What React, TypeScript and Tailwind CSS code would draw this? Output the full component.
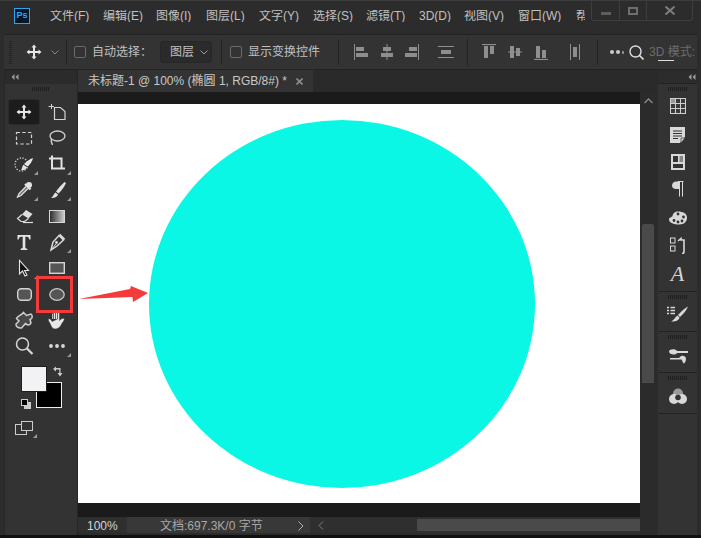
import React from "react";

const FONT = { fontFamily: '"Liberation Sans","Noto Sans CJK SC",sans-serif' };

const s = "#d2d2d2";
function Ic({ children, w = 24, h = 24 }: { children: React.ReactNode; w?: number; h?: number }) {
  return (
    <svg width={w} height={h} viewBox={`0 0 ${w} ${h}`} fill="none" className="block">
      {children}
    </svg>
  );
}

function Corner() {
  return <span className="absolute right-[2px] bottom-[2px] w-0 h-0 border-l-[4px] border-l-transparent border-b-[4px] border-b-[#9a9a9a]" />;
}

const MoveIcon = ({ c = "#e6e6e6" }: { c?: string }) => (
  <Ic w={16} h={16}>
    <path d="M8 0.5 L10.5 3.5 H9 V7 H12.5 V5.5 L15.5 8 L12.5 10.5 V9 H9 V12.5 H10.5 L8 15.5 L5.5 12.5 H7 V9 H3.5 V10.5 L0.5 8 L3.5 5.5 V7 H7 V3.5 H5.5 Z" fill={c} />
  </Ic>
);

const tools: { icon: React.ReactNode; corner?: boolean; active?: boolean }[] = [
  { icon: <MoveIcon />, active: true },
  { icon: <Ic><path d="M3.5 6.5H9M6.5 4V9" stroke={s} /><path d="M9.5 7.5H15.5L20 11.5V19.5H9.5V7.5Z" stroke={s} strokeWidth="1.2" /></Ic> },
  { icon: <Ic><rect x="4.5" y="6.5" width="15" height="11.5" stroke={s} strokeWidth="1.2" strokeDasharray="3.5 2.2" /></Ic> },
  { icon: <Ic><ellipse cx="12.5" cy="10" rx="7.5" ry="5" stroke={s} strokeWidth="1.3" /><path d="M6.5 13C5.5 15 6.5 17 7.5 19" stroke={s} strokeWidth="1.3" /></Ic> },
  { corner: true, icon: <Ic><circle cx="9.5" cy="12.5" r="6.5" stroke={s} strokeWidth="1.4" strokeDasharray="1.2 1.6" /><path d="M21 6C20.5 9 18 12.5 15.5 14.5L12 12C14.5 9.5 17.5 7 21 6Z" fill="#e6e6e6" /><path d="M11.5 12.8L15 15.2C14 17.5 11.5 18.5 9 18C10.5 16.5 10 14 11.5 12.8Z" fill="#e6e6e6" /></Ic> },
  { corner: true, icon: <Ic><path d="M4 6.5H7V3.5M7 6.5H16.5V16M7 6.5V16.5H20" stroke="#e2e2e2" strokeWidth="2" /></Ic> },
  { corner: true, icon: <Ic><circle cx="17" cy="7" r="3" fill="#e4e4e4" /><path d="M13 6L18.5 11.5" stroke="#e4e4e4" strokeWidth="2.2" /><path d="M14 8.5L7 15.5L5.5 19L9 17.5L16 10.5" fill="#777" stroke="#e2e2e2" strokeWidth="1.2" /></Ic> },
  { corner: true, icon: <Ic><path d="M19.5 4L21 5C19 9 16.5 13 13.5 15.5L11 13.5C13.5 10 16.5 7 19.5 4Z" fill="#e2e2e2" /><path d="M10.5 14.5L13 16.5C12.5 19 9 20.5 6 20C8 19 8.5 16 10.5 14.5Z" fill="#e2e2e2" /></Ic> },
  { icon: <Ic><path d="M14 6L20.5 10L16.5 14.5L10 10.5Z" fill="#dedede" /><path d="M10 10.5L5.5 14.5L9 17.5H12.5L16.5 14.5" stroke="#dedede" strokeWidth="1.2" /><path d="M11 18.5H21" stroke="#dedede" strokeWidth="1.2" /></Ic> },
  { icon: <svg width={16} height={13} className="block"><defs><linearGradient id="gr" x1="0" x2="1" y1="0" y2="0"><stop offset="0" stopColor="#2a2a2a" /><stop offset="1" stopColor="#d0d0d0" /></linearGradient></defs><rect x="0.5" y="0.5" width="15" height="12" fill="url(#gr)" stroke="#d8d8d8" /></svg> },
  { icon: <Ic><path d="M5.5 5H18.5V9.5H17.3C17.1 8 16.4 6.8 15 6.8H13.3V17.5C13.3 18.4 14.2 18.6 15.3 18.7V20H8.7V18.7C9.8 18.6 10.7 18.4 10.7 17.5V6.8H9C7.6 6.8 6.9 8 6.7 9.5H5.5Z" fill="#e4e4e4" /></Ic> },
  { corner: true, icon: <Ic><path d="M6 20L8 12L14 5.5L18.5 10L12 16Z" stroke="#dcdcdc" strokeWidth="1.5" /><path d="M14.5 4.5L19.5 9.5" stroke="#dcdcdc" strokeWidth="2" /><circle cx="11.5" cy="12.5" r="1.4" fill="#dcdcdc" /><path d="M6 20L11 14" stroke="#dcdcdc" /></Ic> },
  { corner: true, icon: <Ic><path d="M7.5 4.5V18L10.5 15L13 20L15 19L12.5 14.5H16.5Z" fill="#111" stroke="#e4e4e4" strokeWidth="1.1" /></Ic> },
  { icon: <svg width={16} height={12} className="block"><rect x="0.7" y="0.7" width="14.6" height="10.6" fill="#555" stroke="#d4d4d4" strokeWidth="1.4" /></svg> },
  { icon: <svg width={15} height={13} className="block"><rect x="0.7" y="0.7" width="13.6" height="11.6" rx="3.5" fill="#555" stroke="#d4d4d4" strokeWidth="1.4" /></svg> },
  { icon: <svg width={16} height={13} className="block"><ellipse cx="8" cy="6.5" rx="7.2" ry="5.8" fill="#555" stroke="#c8c8c8" strokeWidth="1.3" /></svg> },
  { icon: <Ic><path d="M11.5 4.5L14.5 7.5L19 6C21 7.5 20.5 11 18 11.5L19 15C18 17.5 15 17.5 13.5 15.5L9.5 20C6.5 20.5 3.5 18.5 4 16L7 13L4.5 10.5C5.5 7.5 9.5 7.5 11.5 4.5Z" fill="#484848" stroke="#cfcfcf" strokeWidth="1.5" /></Ic> },
  { icon: <Ic><path d="M7 11V6C7 5 8.5 5 8.5 6V11M8.5 11V4C8.5 3 10.5 3 10.5 4V11M10.5 11V3.5C10.5 2.5 12.5 2.5 12.5 3.5V11M12.5 11V4.5C12.5 3.5 14.5 3.5 14.5 4.5V12.5C15.5 11.5 18 9.5 19 10.5C20 11.5 18.5 13 17.5 14.5C16 17 14.5 21 10.5 21C7.5 21 6.5 19 5.5 16.5C4.5 14 2.5 12 3.5 11C4.5 10 6.5 12 7 13.5Z" fill="#e8e8e8" stroke="#333" strokeWidth="0.5" /></Ic> },
  { icon: <Ic><circle cx="10.5" cy="10" r="6" stroke="#d8d8d8" strokeWidth="1.5" /><path d="M15 14.5L20.5 20" stroke="#d8d8d8" strokeWidth="2.2" /></Ic> },
  { corner: true, icon: <Ic><circle cx="6" cy="12" r="1.9" fill="#d8d8d8" /><circle cx="12" cy="12" r="1.9" fill="#d8d8d8" /><circle cx="18" cy="12" r="1.9" fill="#d8d8d8" /></Ic> },
];

const menus = [
  ["文件(F)", 53], ["编辑(E)", 53], ["图像(I)", 50], ["图层(L)", 53], ["文字(Y)", 54], ["选择(S)", 53],
  ["滤镜(T)", 53], ["3D(D)", 45], ["视图(V)", 54], ["窗口(W)", 58], ["帮", 9],
] as [string, number][];

const Bars = ({ w = 18 }: { w?: number }) => (
  <div className="h-[4px] shrink-0" style={{ width: w, background: "repeating-linear-gradient(90deg,#1e1e1e 0 1px,transparent 1px 2px)" }} />
);

const Sep = () => <div className="w-px h-[26px] bg-[#222] shrink-0" />;

const g = "#8e8e8e";
const aligns: [number, React.ReactNode][] = [
  [27, <Ic w={14} h={16}><path d="M0.5 0V16" stroke={g} /><rect x="2" y="3" width="8" height="4" fill={g} /><rect x="2" y="9" width="12" height="4" fill={g} /></Ic>],
  [24, <Ic w={12} h={16}><path d="M6 0V16" stroke={g} /><rect x="2" y="3" width="8" height="4" fill={g} /><rect x="0" y="9" width="12" height="4" fill={g} /></Ic>],
  [33, <Ic w={14} h={16}><path d="M13.5 0V16" stroke={g} /><rect x="4" y="3" width="8" height="4" fill={g} /><rect x="0" y="9" width="12" height="4" fill={g} /></Ic>],
  [29, <Ic w={16} h={12}><path d="M0 0.5H16M0 11.5H16" stroke={g} /><rect x="3" y="4" width="10" height="4" fill={g} /></Ic>],
];
const aligns2: [number, React.ReactNode][] = [
  [26, <Ic w={14} h={16}><path d="M0 0.5H14" stroke={g} strokeWidth="1.2" /><rect x="2" y="2" width="4" height="12" fill={g} /><rect x="8" y="2" width="4" height="8" fill={g} /></Ic>],
  [26, <Ic w={14} h={12}><path d="M0 6H14" stroke={g} /><rect x="2" y="0" width="4" height="12" fill={g} /><rect x="8" y="2" width="4" height="8" fill={g} /></Ic>],
  [36, <Ic w={14} h={16}><path d="M0 15.5H14" stroke={g} strokeWidth="1.2" /><rect x="2" y="2" width="4" height="12" fill={g} /><rect x="8" y="6" width="4" height="8" fill={g} /></Ic>],
  [27, <Ic w={10} h={16}><path d="M0.5 0V16M9.5 0V16" stroke={g} /><rect x="3" y="3" width="4" height="10" fill={g} /></Ic>],
];

const panel: [number, React.ReactNode][][] = [
  [
    [30, <Ic w={16} h={16}><rect x="0.5" y="0.5" width="15" height="15" fill="#3a3a3a" stroke="#cfcfcf" /><rect x="1" y="1" width="4.6" height="4.6" fill="#9a9a9a" /><path d="M5.5 0V16M10.5 0V16M0 5.5H16M0 10.5H16" stroke="#cfcfcf" /></Ic>],
    [28, <Ic w={15} h={16}><path d="M0 0H15V10L10 16H0Z" fill="#d8d8d8" /><path d="M3 4H12M3 6.5H12M3 9H12M3 11.5H8" stroke="#333" /><path d="M15 11L11 16V11Z" fill="#d8d8d8" stroke="#333" strokeWidth="0.7" /></Ic>],
    [26, <Ic w={14} h={16}><rect width="14" height="16" fill="#d8d8d8" /><rect x="2" y="2" width="5" height="6" fill="#333" /><path d="M8.5 3H12M8.5 5H12M8.5 7H12" stroke="#333" /><rect x="2" y="10" width="10" height="4" fill="#333" /></Ic>],
    [28, <Ic w={12} h={16}><path d="M7 0.5H4.5C1.5 0.5 0 2.5 0 4.5C0 6.5 1.5 8 4 8H7Z" fill="#d8d8d8" /><path d="M7.5 0.5V15.5M10.5 0.5V15.5M6 0.5H11.5" stroke="#d8d8d8" /></Ic>],
    [30, <Ic w={18} h={14}><path d="M9 0.5C14 0.5 18 2.5 18 6.5C18 10 16 13.5 10 13.5C5 13.5 0 12 0 8.5C0 6 3 6.5 3.5 5C4 3 5 0.5 9 0.5Z" fill="#d8d8d8" /><circle cx="5" cy="9.5" r="1.4" fill="#333" /><circle cx="9" cy="11" r="1.4" fill="#333" /><circle cx="13" cy="10" r="1.4" fill="#333" /><circle cx="14.5" cy="6" r="1.4" fill="#333" /><circle cx="9" cy="3" r="1.4" fill="#333" /></Ic>],
    [24, <Ic w={16} h={17}><rect x="0.5" y="1" width="4.5" height="5" stroke="#d8d8d8" fill="none" /><rect x="0.5" y="9" width="4.5" height="5" stroke="#d8d8d8" fill="none" /><path d="M8 4L11 1.5V3H14V15C14 16 13 16.5 12 16.5" stroke="#d8d8d8" strokeWidth="1.6" /></Ic>],
    [34, <span className="italic text-[#d4d4d4] text-[22px] leading-none" style={{ fontFamily: '"Liberation Serif",serif' }}>A</span>],
  ],
  [[32, <Ic w={21} h={18}><path d="M0 1.5H2M3.5 1.5H8M0 4.5H2M3.5 4.5H8M0 7.5H2M3.5 7.5H8" stroke="#d8d8d8" strokeWidth="1.4" /><path d="M21 0.5C18 2 14 5.5 11 9L13 11C16 8.5 19.5 4.5 21 0.5Z" fill="#d8d8d8" /><path d="M10.5 9.5L12.5 11.5C12 14.5 8 16 4 15.5C7 14.5 8 11 10.5 9.5Z" fill="#d8d8d8" /></Ic>],
  ],
  [[33, <Ic w={20} h={16}><path d="M1 3.5C1 2 4 1 7 1.5L9.5 3H20V5H9.5L7 6.5C4 7 1 5.5 1 3.5Z" fill="#d8d8d8" /><path d="M2 10H11L13 8C15 7 18 8.5 18 10.5C18 13 17 15.5 15.5 15.5L13.5 11.5H2Z" fill="#d8d8d8" /></Ic>],
  ],
  [[33, <Ic w={18} h={17}><circle cx="9" cy="5.5" r="5" fill="#999" /><circle cx="5" cy="11" r="5" fill="#d8d8d8" /><circle cx="13" cy="11" r="5" fill="#d8d8d8" /><circle cx="9" cy="9.5" r="2.8" fill="#333" /></Ic>],
  ],
];

export default function App() {
  return (
    <div className="relative w-[701px] h-[538px] overflow-hidden bg-[#2c2c2c] flex flex-col text-[#c0c0c0] text-[12px] leading-none" style={FONT}>
      {/* title bar */}
      <div className="h-[34px] shrink-0 flex items-center relative border-t border-[#3c3c3c]">
        <div className="ml-[14px] w-[16px] h-[16px] mb-[4px] border border-[#2aa7e8] bg-[#00182a] text-[#31a8ff] text-[9px] font-bold flex items-center justify-center">Ps</div>
        <div className="ml-[20px] mb-[3px] flex items-center">
          {menus.map(([m, w]) => (
            <span key={m} className="block whitespace-nowrap overflow-hidden" style={{ width: w }}>{m}</span>
          ))}
        </div>
        <div className="absolute right-[8px] top-0 w-[102px] h-[20px] flex border border-t-0 border-[#3e3e3e] rounded-b-[3px]">
          <div className="w-[28px] border-r border-[#3e3e3e] flex items-center justify-center"><div className="w-[10px] h-[3px] mt-[6px] bg-[#5e5e5e]" /></div>
          <div className="w-[27px] border-r border-[#3e3e3e] flex items-center justify-center"><div className="w-[10px] h-[8px] border-2 border-[#6e6e6e]" /></div>
          <div className="flex-1 flex items-center justify-center">
            <Ic w={10} h={9}><path d="M0.5 0.5L9.5 8.5M9.5 0.5L0.5 8.5" stroke="#7c7c7c" strokeWidth="2" /></Ic>
          </div>
        </div>
      </div>

      {/* options bar */}
      <div className="h-[36px] shrink-0 mx-[4px] bg-[#333333] border-y border-[#232323] flex items-center overflow-hidden">
        <div className="w-[3px] h-[24px] ml-[5px] shrink-0" style={{ background: "repeating-linear-gradient(0deg,#232323 0 1px,transparent 1px 2px)" }} />
        <div className="ml-[14px]"><MoveIcon /></div>
        <svg width="8" height="5" className="ml-[9px] shrink-0"><path d="M0.5 0.5L4 4L7.5 0.5" stroke="#8a8a8a" fill="none" /></svg>
        <div className="ml-[7px]"><Sep /></div>
        <div className="ml-[7px] w-[12px] h-[12px] rounded-[2px] border border-[#6a6a6a] shrink-0" />
        <span className="ml-[6px] w-[60px] shrink-0 whitespace-nowrap">自动选择：</span>
        <div className="ml-[8px] w-[52px] h-[22px] rounded-[3px] border border-[#262626] bg-[#2b2b2b] flex items-center pl-[9px] shrink-0">
          <span>图层</span>
          <svg width="8" height="5" className="ml-[6px]"><path d="M0.5 0.5L4 4L7.5 0.5" stroke="#9a9a9a" fill="none" /></svg>
        </div>
        <div className="ml-[9px]"><Sep /></div>
        <div className="ml-[8px] w-[12px] h-[12px] rounded-[2px] border border-[#6a6a6a] shrink-0" />
        <span className="ml-[6px] w-[72px] shrink-0 whitespace-nowrap">显示变换控件</span>
        <div className="ml-[18px]"><Sep /></div>
        <div className="ml-[15px] flex items-center shrink-0">
          {aligns.map(([w, ic], i) => <div key={i} style={{ width: w }}>{ic}</div>)}
        </div>
        <Sep />
        <div className="ml-[14px] flex items-center shrink-0">
          {aligns2.map(([w, ic], i) => <div key={i} style={{ width: w }}>{ic}</div>)}
        </div>
        <Sep />
        <div className="ml-[12px] flex items-center gap-[2px] shrink-0">
          <span className="w-[4px] h-[4px] rounded-full bg-[#ccc]" />
          <span className="w-[4px] h-[4px] rounded-full bg-[#ccc]" />
          <span className="w-[2px] h-[3px] rounded-full bg-[#999]" />
        </div>
        <div className="ml-[5px] shrink-0"><Ic w={15} h={15}><circle cx="6.5" cy="6.5" r="5.5" stroke="#ddd" strokeWidth="1.4" /><path d="M10.5 10.5L14.5 14.5" stroke="#ddd" strokeWidth="1.6" /></Ic></div>
        <span className="ml-[5px] whitespace-nowrap text-[#6c6c6c] relative">3D 模式:<span className="absolute left-[9px] -bottom-[3px] w-[16px] h-px bg-[#ddd]" /></span>
      </div>

      {/* main */}
      <div className="flex-1 flex min-h-0">
        {/* toolbox */}
        <div className="w-[74px] ml-[4px] shrink-0 bg-[#333333] border-x border-[#262626] flex flex-col">
          <div className="h-[14px] shrink-0 bg-[#2b2b2b] flex items-center pl-[6px]">
            <svg width="8" height="6"><path d="M3.5 0L0.5 3L3.5 6ZM7.5 0L4.5 3L7.5 6Z" fill="#9a9a9a" /></svg>
          </div>
          <div className="mt-[3px] flex justify-center"><Bars w={18} /></div>
          <div className="mt-[8px] grid grid-cols-[32px_32px] gap-x-px auto-rows-[26px] ml-[3px]">
            {tools.map((t, i) => (
              <div key={i} className={"relative flex items-center justify-center " + (t.active ? "bg-[#1c1c1c] rounded-[3px] border border-[#2a2a2a]" : "")}>
                {t.icon}
                {t.corner && <Corner />}
              </div>
            ))}
          </div>
          {/* colors */}
          <div className="relative h-[55px] mt-[7px] shrink-0">
            <div className="absolute left-[31px] top-[16px] w-[26px] h-[26px] bg-black border border-[#eee]" />
            <div className="absolute left-[16px] top-0 w-[26px] h-[26px] bg-[#f2f2f4] border border-[#1e1e1e]" />
            <div className="absolute left-[48px] top-0"><Ic w={11} h={11}><path d="M0 3L3 0.5V2H7.5V7H9.5L7 10.5L4.5 7H6.3V3.5H3V5.5Z" fill="#ccc" /></Ic></div>
            <div className="absolute left-[19px] top-[36px] w-[7px] h-[7px] bg-[#ccc]" />
            <div className="absolute left-[16px] top-[33px] w-[7px] h-[7px] bg-black border border-[#ccc]" />
          </div>
          <div className="relative ml-[10px] w-[18px] h-[14px] shrink-0">
            <Ic w={18} h={14}>
              <rect x="0.5" y="3.5" width="11" height="10" stroke="#ccc" />
              <rect x="6.5" y="0.5" width="11" height="9" fill="#333" stroke="#ccc" />
            </Ic>
            <span className="absolute left-[18px] top-[13px] w-0 h-0 border-l-[4px] border-l-transparent border-b-[4px] border-b-[#9a9a9a]" />
          </div>
        </div>

        {/* document */}
        <div className="flex-1 min-w-0 flex flex-col">
          <div className="h-[22px] shrink-0 bg-[#2a2a2a] flex">
            <div className="w-[235px] h-full bg-[#333333] flex items-center pl-[10px] whitespace-nowrap text-[#c8c8c8] text-[12px]">
              未标题-1 @ 100% (椭圆 1, RGB/8#) *
              <svg width="7" height="7" className="ml-[9px] shrink-0"><path d="M0.5 0.5L6.5 6.5M6.5 0.5L0.5 6.5" stroke="#8c8c8c" strokeWidth="1.6" /></svg>
            </div>
          </div>
          <div className="flex-1 min-h-0 flex">
            <div className="w-[562px] shrink-0 flex flex-col">
              <div className="flex-1 min-h-0 bg-[#1b1b1b] pt-[12px]">
                <div className="h-[399px] bg-white relative overflow-hidden">
                  <div className="absolute left-[71px] top-[16px] w-[386px] h-[368px] rounded-[50%] bg-[#0af7e6]" />
                </div>
              </div>
              <div className="h-[16px] mb-[2px] shrink-0 flex items-center bg-[#2f2f2f]">
                <span className="w-[49px] pl-[9px] pt-px text-[#d4d4d4] whitespace-nowrap shrink-0">100%</span>
                <span className="pl-[33px] pr-[6px] pt-px w-[183px] h-full bg-[#383838] flex items-center justify-between text-[#a8a8a8] whitespace-nowrap shrink-0">
                  文档:697.3K/0 字节
                  <svg width="6" height="10" className="shrink-0"><path d="M0.5 0.5L5 5L0.5 9.5" stroke="#b0b0b0" fill="none" /></svg>
                </span>
                <svg width="6" height="9" className="ml-[8px] shrink-0"><path d="M5 0.5L1 4.5L5 8.5" stroke="#808080" fill="none" /></svg>
                <div className="ml-auto w-[223px] h-[12px] bg-[#4a4a4a] shrink-0" />
              </div>
            </div>
            <div className="w-[16px] shrink-0 bg-[#2b2b2b] flex flex-col items-center pt-[6px]">
              <svg width="9" height="6" className="shrink-0"><path d="M0.5 5L4.5 1L8.5 5" stroke="#8a8a8a" strokeWidth="1.3" fill="none" /></svg>
              <div className="mt-[120px] w-[12px] h-[159px] bg-[#4a4a4a] rounded-t-[2px] shrink-0" />
            </div>
          </div>
        </div>

        {/* right panels */}
        <div className="w-[43px] shrink-0 flex flex-col bg-[#2c2c2c] pr-[4px]">
          <div className="h-[13px] shrink-0 flex items-center justify-end pr-[1px]">
            <svg width="8" height="6"><path d="M3.5 0L0.5 3L3.5 6ZM7.5 0L4.5 3L7.5 6Z" fill="#9a9a9a" /></svg>
          </div>
          {panel.map((grp, gi) => (
            <div key={gi} className="bg-[#333333] border-t border-[#222] flex flex-col items-center pt-[3px] shrink-0">
              <Bars w={19} />
              <div className="flex flex-col items-center">
                {grp.map(([h, ic], i) => (
                  <div key={i} className="flex items-center justify-center" style={{ height: h }}>{ic}</div>
                ))}
              </div>
            </div>
          ))}
          <div className="flex-1 bg-[#333333] border-t border-[#222]" />
        </div>
      </div>
      <div className="h-[3px] shrink-0 bg-[#111]" />

      {/* annotation */}
      <div className="absolute left-[36px] top-[276px] w-[37px] h-[37px] border-[3px] border-[#f43b3b]" />
      <svg className="absolute left-[78px] top-[284px]" width="72" height="20">
        <path d="M1 15L52 5L53 2L70 9L55 18L54.5 13Z" fill="#f43b3b" />
      </svg>
    </div>
  );
}
